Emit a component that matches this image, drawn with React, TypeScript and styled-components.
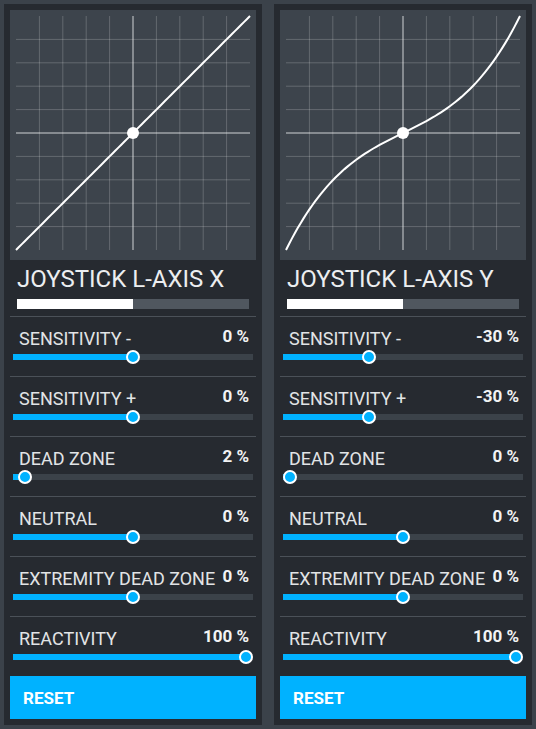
import React from "react";
import styled, { createGlobalStyle } from "styled-components";

const BLUE = "#00b2ff";

const GlobalStyle = createGlobalStyle`
  html, body {
    margin: 0;
    padding: 0;
    background: #3b424a;
    font-family: Roboto, "Liberation Sans", sans-serif;
  }
`;

interface Setting {
  label: string;
  value: number;
  bipolar: boolean;
}

interface AxisProps {
  title: string;
  sensitivity: number;
  settings: Setting[];
}

const GRID = 234;
const GRID_OFFSET = 6;

function curvePath(sensitivity: number): string {
  const a = 1 + (sensitivity / 100) * 1.7;
  const half = GRID / 2;
  const c = GRID_OFFSET + half;
  const pts: string[] = [];
  for (let i = 0; i <= 80; i++) {
    const u = -1 + (i / 80) * 2;
    const v = a * u + (1 - a) * u * u * u;
    pts.push(`${(c + u * half).toFixed(2)},${(c - v * half).toFixed(2)}`);
  }
  return "M" + pts.join(" L");
}

const Graph: React.FC<{ sensitivity: number }> = ({ sensitivity }) => {
  const step = GRID / 10;
  const lines = [];
  for (let i = 1; i < 10; i++) {
    const p = GRID_OFFSET + i * step;
    const main = i === 5;
    const stroke = main ? "rgba(255,255,255,0.38)" : "rgba(255,255,255,0.2)";
    const w = main ? 2 : 1;
    lines.push(
      <line key={"v" + i} x1={p} y1={GRID_OFFSET} x2={p} y2={GRID_OFFSET + GRID} stroke={stroke} strokeWidth={w} />,
      <line key={"h" + i} x1={GRID_OFFSET} y1={p} x2={GRID_OFFSET + GRID} y2={p} stroke={stroke} strokeWidth={w} />
    );
  }
  const c = GRID_OFFSET + GRID / 2;
  return (
    <GraphBox width="246" height="250" viewBox="0 0 246 250">
      {lines}
      <path d={curvePath(sensitivity)} fill="none" stroke="#fff" strokeWidth={2} />
      <circle cx={c} cy={c} r={6} fill="#fff" />
    </GraphBox>
  );
};

const Slider: React.FC<{ fraction: number }> = ({ fraction }) => {
  const pos = 7 + fraction * 226;
  return (
    <Track>
      <Fill style={{ width: pos }} />
      <Thumb style={{ left: pos }} />
    </Track>
  );
};

const AxisPanel: React.FC<AxisProps> = ({ title, sensitivity, settings }) => (
  <Panel>
    <Graph sensitivity={sensitivity} />
    <Title>{title}</Title>
    <AxisBar>
      <AxisBarFill />
    </AxisBar>
    {settings.map((s) => {
      const frac = s.bipolar ? (s.value + 100) / 200 : s.value / 100;
      return (
        <Row key={s.label}>
          <RowHeader>
            <Label>{s.label}</Label>
            <Value>{s.value} %</Value>
          </RowHeader>
          <Slider fraction={frac} />
        </Row>
      );
    })}
    <ResetButton>RESET</ResetButton>
  </Panel>
);

const makeSettings = (sens: number): Setting[] => [
  { label: "SENSITIVITY -", value: sens, bipolar: true },
  { label: "SENSITIVITY +", value: sens, bipolar: true },
  { label: "DEAD ZONE", value: sens === 0 ? 2 : 0, bipolar: false },
  { label: "NEUTRAL", value: 0, bipolar: true },
  { label: "EXTREMITY DEAD ZONE", value: 0, bipolar: true },
  { label: "REACTIVITY", value: 100, bipolar: false },
];

export default function App() {
  return (
    <>
      <GlobalStyle />
      <Page>
        <AxisPanel title="JOYSTICK L-AXIS X" sensitivity={0} settings={makeSettings(0)} />
        <AxisPanel title="JOYSTICK L-AXIS Y" sensitivity={-30} settings={makeSettings(-30)} />
      </Page>
    </>
  );
}

const Page = styled.div`
  display: flex;
  gap: 12px;
  padding: 4px;
`;

const Panel = styled.div`
  width: 258px;
  box-sizing: border-box;
  padding: 6px;
  background: #262a30;
  display: flex;
  flex-direction: column;
`;

const GraphBox = styled.svg`
  display: block;
  background: #3d444c;
`;

const Title = styled.div`
  margin-top: 5px;
  padding-left: 7px;
  height: 28px;
  line-height: 28px;
  font-size: 24px;
  font-weight: 400;
  color: #eceef0;
  white-space: nowrap;
`;

const AxisBar = styled.div`
  margin: 6px 7px 0;
  height: 10px;
  background: #50575f;
  margin-bottom: 7px;
`;

const AxisBarFill = styled.div`
  width: 50%;
  height: 100%;
  background: #fff;
`;

const Row = styled.div`
  height: 60px;
  box-sizing: border-box;
  border-top: 1px solid #4b5158;
`;

const RowHeader = styled.div`
  display: flex;
  justify-content: space-between;
  align-items: flex-start;
  margin-top: 11px;
  padding: 0 7px 0 9px;
  height: 21px;
`;

const Label = styled.span`
  font-size: 18px;
  line-height: 21px;
  color: #e2e4e6;
  white-space: nowrap;
`;

const Value = styled.span`
  font-size: 17px;
  line-height: 16px;
  font-weight: 700;
  color: #f2f3f4;
  white-space: nowrap;
`;

const Track = styled.div`
  position: relative;
  margin: 5px 3px 0;
  height: 6px;
  background: #3b4249;
`;

const Fill = styled.div`
  position: absolute;
  left: 0;
  top: 0;
  height: 100%;
  background: ${BLUE};
`;

const Thumb = styled.div`
  position: absolute;
  top: 50%;
  width: 14px;
  height: 14px;
  box-sizing: border-box;
  border: 2px solid #fff;
  border-radius: 50%;
  background: ${BLUE};
  transform: translate(-50%, -50%);
`;

const ResetButton = styled.div`
  height: 43px;
  display: flex;
  align-items: center;
  padding-left: 13px;
  background: ${BLUE};
  color: #fff;
  font-size: 17px;
  font-weight: 700;
`;
